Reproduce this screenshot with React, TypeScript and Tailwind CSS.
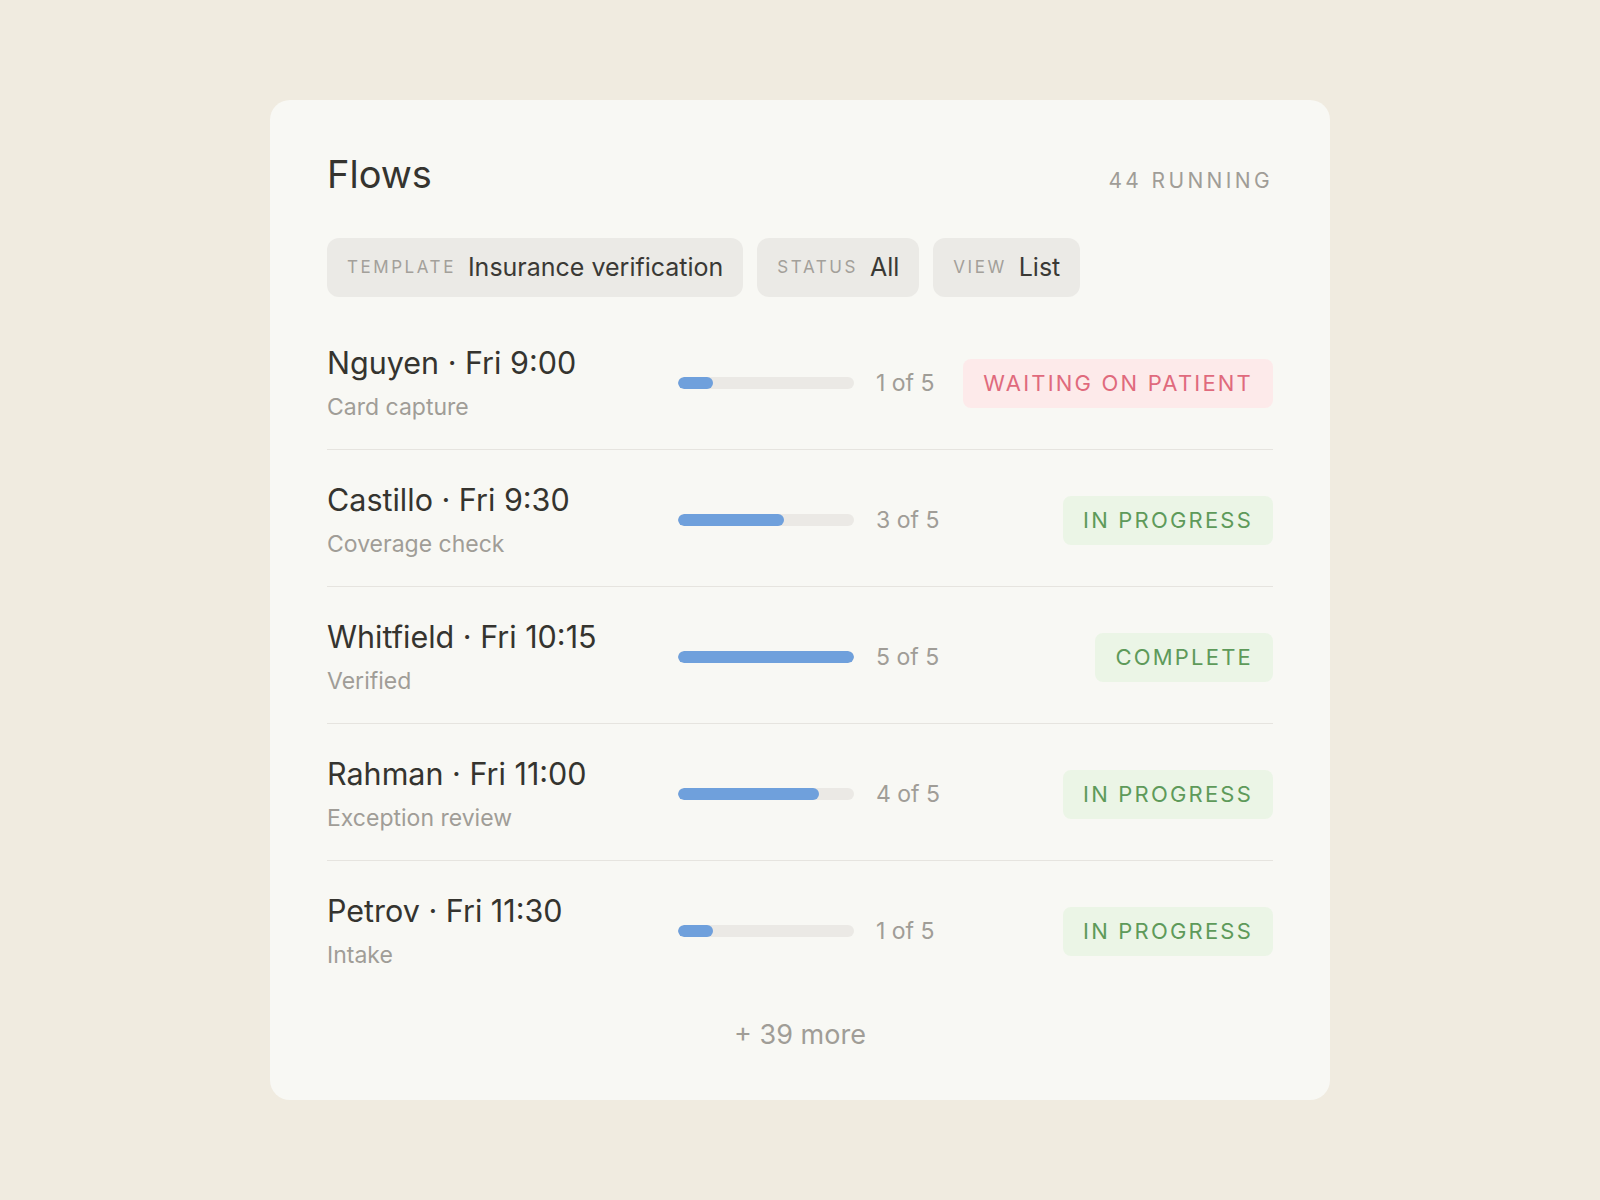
const flows = [
  { name: 'Nguyen · Fri 9:00', step: 'Card capture', done: 1, status: 'waiting' },
  { name: 'Castillo · Fri 9:30', step: 'Coverage check', done: 3, status: 'progress' },
  { name: 'Whitfield · Fri 10:15', step: 'Verified', done: 5, status: 'complete' },
  { name: 'Rahman · Fri 11:00', step: 'Exception review', done: 4, status: 'progress' },
  { name: 'Petrov · Fri 11:30', step: 'Intake', done: 1, status: 'progress' },
] as const;

type Status = (typeof flows)[number]['status'];

const badgeStyles: Record<Status, { label: string; className: string }> = {
  waiting: { label: 'Waiting on patient', className: 'bg-[#fdeaea] text-[#e06a7d]' },
  progress: { label: 'In progress', className: 'bg-[#ebf5e6] text-[#5e9a5a]' },
  complete: { label: 'Complete', className: 'bg-[#ebf5e6] text-[#5e9a5a]' },
};

function FilterChip({ label, value }: { label: string; value: string }) {
  return (
    <div className="flex h-[59px] items-center gap-3 rounded-[12px] bg-[#ebeae6] px-5">
      <span className="text-[17px] uppercase tracking-[0.15em] text-[#a3a09a]">{label}</span>
      <span className="text-[25px] text-[#3a3935]">{value}</span>
    </div>
  );
}

function Badge({ status }: { status: Status }) {
  const b = badgeStyles[status];
  return (
    <span
      className={`flex h-[49px] items-center rounded-[8px] px-5 text-[22px] uppercase tracking-[0.1em] ${b.className}`}
    >
      {b.label}
    </span>
  );
}

export default function App() {
  return (
    <div
      className="flex min-h-screen justify-center bg-[#f0ebe0] pt-[100px]"
      style={{ fontFamily: 'Inter, "Liberation Sans", sans-serif' }}
    >
      <div className="h-[1000px] w-[1060px] rounded-[20px] bg-[#f8f8f4] px-[57px] pt-[50px]">
        {/* header */}
        <div className="flex items-baseline justify-between">
          <h1 className="text-[38px] leading-[48px] text-[#35342f]">Flows</h1>
          <span className="text-[21px] uppercase tracking-[0.16em] text-[#a09d97]">44 running</span>
        </div>

        {/* filters */}
        <div className="mt-[40px] flex gap-[14px]">
          <FilterChip label="Template" value="Insurance verification" />
          <FilterChip label="Status" value="All" />
          <FilterChip label="View" value="List" />
        </div>

        {/* rows */}
        <div className="mt-4">
          {flows.map((f, i) => (
            <div
              key={f.name}
              className={`flex items-center pt-8 pb-[28px] ${i < flows.length - 1 ? 'border-b border-[#e6e4df]' : ''}`}
            >
              <div className="w-[351px]">
                <div className="text-[30.5px] leading-[36px] text-[#35342f]">{f.name}</div>
                <div className="mt-3 text-[23px] leading-[28px] text-[#a09d97]">{f.step}</div>
              </div>
              <div className="h-3 w-[176px] overflow-hidden rounded-full bg-[#ebe9e5]">
                <div className="h-full rounded-full bg-[#6fa0dc]" style={{ width: `${(f.done / 5) * 100}%` }} />
              </div>
              <span className="ml-[22px] text-[23px] text-[#a09d97]">{f.done} of 5</span>
              <div className="ml-auto">
                <Badge status={f.status} />
              </div>
            </div>
          ))}
        </div>

        <div className="mt-[22px] text-center text-[27px] leading-[32px] text-[#a09d97]">+ 39 more</div>
      </div>
    </div>
  );
}
